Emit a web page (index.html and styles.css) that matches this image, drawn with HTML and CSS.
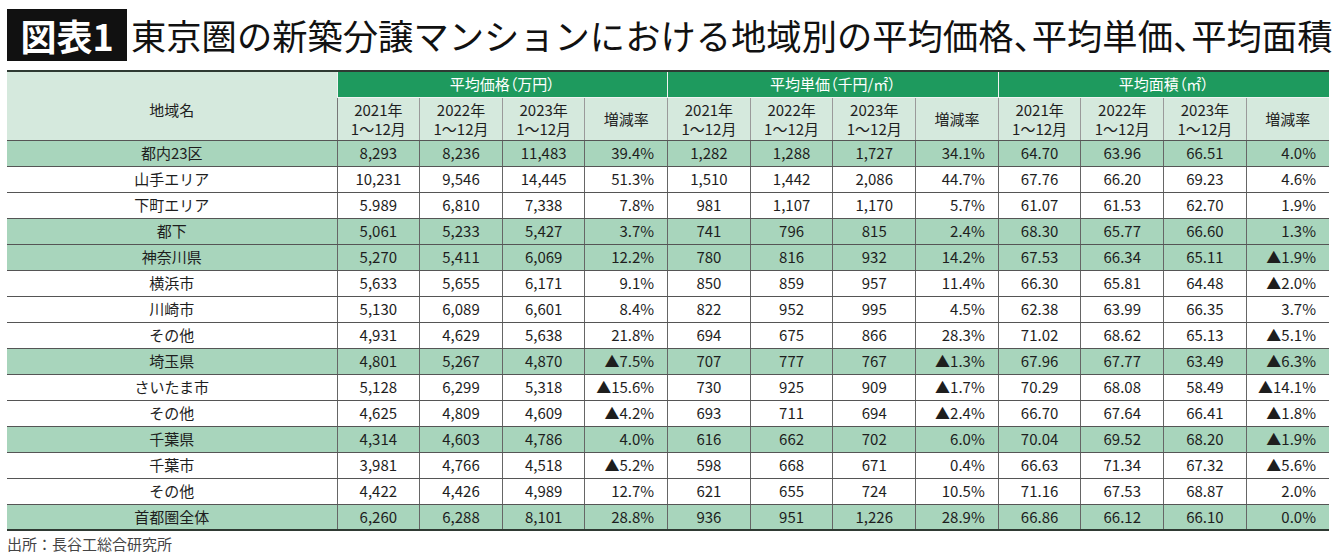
FILE: index.html
```html
<!DOCTYPE html>
<html lang="ja">
<head>
<meta charset="utf-8">
<link rel="stylesheet" href="styles.css">
</head>
<body>
<div class="page">
  <div class="title-row">
    <div class="badge">図表1</div>
    <h1 class="title">東京圏の新築分譲マンションにおける地域別の平均価格<span class="comma">、</span>平均単価<span class="comma">、</span>平均面積</h1>
  </div>
  <table class="data">
    <colgroup>
      <col class="c-name">
      <col span="12" class="c-num">
    </colgroup>
    <thead>
      <tr class="h1">
        <th rowspan="2" class="name-h">地域名</th>
        <th colspan="4" class="grp">平均価格（万円）</th>
        <th colspan="4" class="grp">平均単価（千円/㎡）</th>
        <th colspan="4" class="grp">平均面積（㎡）</th>
      </tr>
      <tr class="h2">
        <th>2021年<br>1〜12月</th><th>2022年<br>1〜12月</th><th>2023年<br>1〜12月</th><th>増減率</th>
        <th>2021年<br>1〜12月</th><th>2022年<br>1〜12月</th><th>2023年<br>1〜12月</th><th>増減率</th>
        <th>2021年<br>1〜12月</th><th>2022年<br>1〜12月</th><th>2023年<br>1〜12月</th><th>増減率</th>
      </tr>
    </thead>
    <tbody>
      <tr class="hl"><td>都内23区</td><td>8,293</td><td>8,236</td><td>11,483</td><td class="pct">39.4%</td><td>1,282</td><td>1,288</td><td>1,727</td><td class="pct">34.1%</td><td>64.70</td><td>63.96</td><td>66.51</td><td class="pct">4.0%</td></tr>
      <tr><td>山手エリア</td><td>10,231</td><td>9,546</td><td>14,445</td><td class="pct">51.3%</td><td>1,510</td><td>1,442</td><td>2,086</td><td class="pct">44.7%</td><td>67.76</td><td>66.20</td><td>69.23</td><td class="pct">4.6%</td></tr>
      <tr><td>下町エリア</td><td>5.989</td><td>6,810</td><td>7,338</td><td class="pct">7.8%</td><td>981</td><td>1,107</td><td>1,170</td><td class="pct">5.7%</td><td>61.07</td><td>61.53</td><td>62.70</td><td class="pct">1.9%</td></tr>
      <tr class="hl"><td>都下</td><td>5,061</td><td>5,233</td><td>5,427</td><td class="pct">3.7%</td><td>741</td><td>796</td><td>815</td><td class="pct">2.4%</td><td>68.30</td><td>65.77</td><td>66.60</td><td class="pct">1.3%</td></tr>
      <tr class="hl"><td>神奈川県</td><td>5,270</td><td>5,411</td><td>6,069</td><td class="pct">12.2%</td><td>780</td><td>816</td><td>932</td><td class="pct">14.2%</td><td>67.53</td><td>66.34</td><td>65.11</td><td class="pct">▲1.9%</td></tr>
      <tr><td>横浜市</td><td>5,633</td><td>5,655</td><td>6,171</td><td class="pct">9.1%</td><td>850</td><td>859</td><td>957</td><td class="pct">11.4%</td><td>66.30</td><td>65.81</td><td>64.48</td><td class="pct">▲2.0%</td></tr>
      <tr><td>川崎市</td><td>5,130</td><td>6,089</td><td>6,601</td><td class="pct">8.4%</td><td>822</td><td>952</td><td>995</td><td class="pct">4.5%</td><td>62.38</td><td>63.99</td><td>66.35</td><td class="pct">3.7%</td></tr>
      <tr><td>その他</td><td>4,931</td><td>4,629</td><td>5,638</td><td class="pct">21.8%</td><td>694</td><td>675</td><td>866</td><td class="pct">28.3%</td><td>71.02</td><td>68.62</td><td>65.13</td><td class="pct">▲5.1%</td></tr>
      <tr class="hl"><td>埼玉県</td><td>4,801</td><td>5,267</td><td>4,870</td><td class="pct">▲7.5%</td><td>707</td><td>777</td><td>767</td><td class="pct">▲1.3%</td><td>67.96</td><td>67.77</td><td>63.49</td><td class="pct">▲6.3%</td></tr>
      <tr><td>さいたま市</td><td>5,128</td><td>6,299</td><td>5,318</td><td class="pct">▲15.6%</td><td>730</td><td>925</td><td>909</td><td class="pct">▲1.7%</td><td>70.29</td><td>68.08</td><td>58.49</td><td class="pct">▲14.1%</td></tr>
      <tr><td>その他</td><td>4,625</td><td>4,809</td><td>4,609</td><td class="pct">▲4.2%</td><td>693</td><td>711</td><td>694</td><td class="pct">▲2.4%</td><td>66.70</td><td>67.64</td><td>66.41</td><td class="pct">▲1.8%</td></tr>
      <tr class="hl"><td>千葉県</td><td>4,314</td><td>4,603</td><td>4,786</td><td class="pct">4.0%</td><td>616</td><td>662</td><td>702</td><td class="pct">6.0%</td><td>70.04</td><td>69.52</td><td>68.20</td><td class="pct">▲1.9%</td></tr>
      <tr><td>千葉市</td><td>3,981</td><td>4,766</td><td>4,518</td><td class="pct">▲5.2%</td><td>598</td><td>668</td><td>671</td><td class="pct">0.4%</td><td>66.63</td><td>71.34</td><td>67.32</td><td class="pct">▲5.6%</td></tr>
      <tr><td>その他</td><td>4,422</td><td>4,426</td><td>4,989</td><td class="pct">12.7%</td><td>621</td><td>655</td><td>724</td><td class="pct">10.5%</td><td>71.16</td><td>67.53</td><td>68.87</td><td class="pct">2.0%</td></tr>
      <tr class="hl last"><td>首都圏全体</td><td>6,260</td><td>6,288</td><td>8,101</td><td class="pct">28.8%</td><td>936</td><td>951</td><td>1,226</td><td class="pct">28.9%</td><td>66.86</td><td>66.12</td><td>66.10</td><td class="pct">0.0%</td></tr>
    </tbody>
  </table>
  <div class="source">出所：長谷工総合研究所</div>
</div>
</body>
</html>
```

FILE: styles.css
```css
* { box-sizing: border-box; }
html, body { margin: 0; padding: 0; background: #fff; }
body {
  font-family: "Noto Sans CJK JP", "Noto Sans", sans-serif;
  color: #1e1e1e;
}
.page {
  padding: 8px 11px 0 7px;
  width: 1340px;
}
.title-row {
  display: flex;
  align-items: center;
  height: 53px;
  gap: 4px;
}
.badge {
  flex-shrink: 0;
  background: #111;
  color: #fff;
  font-weight: 700;
  font-size: 36px;
  line-height: 52px;
  height: 52px;
  width: 120px;
  text-align: center;
}
.title {
  margin: 0;
  font-weight: 400;
  font-size: 35.3px;
  line-height: 52px;
  color: #111;
  white-space: nowrap;
}
.comma { letter-spacing: -17px; }
.data {
  margin-top: 9px;
  width: 1322px;
  border-collapse: collapse;
  table-layout: fixed;
  border-top: 2px solid #2f3a33;
  border-bottom: 2px solid #2f3a33;
  font-size: 15px;
}
.c-name { width: 330px; }
.data th, .data td {
  padding: 0;
  text-align: center;
  font-weight: 400;
  white-space: nowrap;
}
.data th {
  border-left: 1px solid #f2f2f2;
  border-bottom: 1px solid #f2f2f2;
}
.h1 th.grp {
  background: #1e9a5e;
  color: #fff;
  height: 26px;
  font-size: 15px;
  line-height: 20px;
  font-feature-settings: "palt";
}
.h1 th.name-h {
  background: #d5e9dd;
  border-left: none;
  border-bottom: 1px solid #555;
  font-size: 15px;
  padding-top: 8px;
}
.h2 th {
  background: #d5e9dd;
  height: 43px;
  font-size: 15px;
  line-height: 19px;
  border-left: 1px solid #9a9a9a;
  border-bottom: 1px solid #555;
}
.h2 th:first-child { border-left: 1px solid #777; }
.data td {
  height: 26px;
  line-height: 20px;
  border-left: 1px solid #666;
  border-bottom: 1px solid #555;
}
.data td:first-child { border-left: none; }
.data td.pct { text-align: right; padding-right: 13px; }
.data tr.hl td { background: #a8d5bc; }
.data tr.last td { border-bottom: none; }
.source {
  margin-top: 3px;
  font-size: 15px;
  color: #444;
  line-height: 20px;
}
```
